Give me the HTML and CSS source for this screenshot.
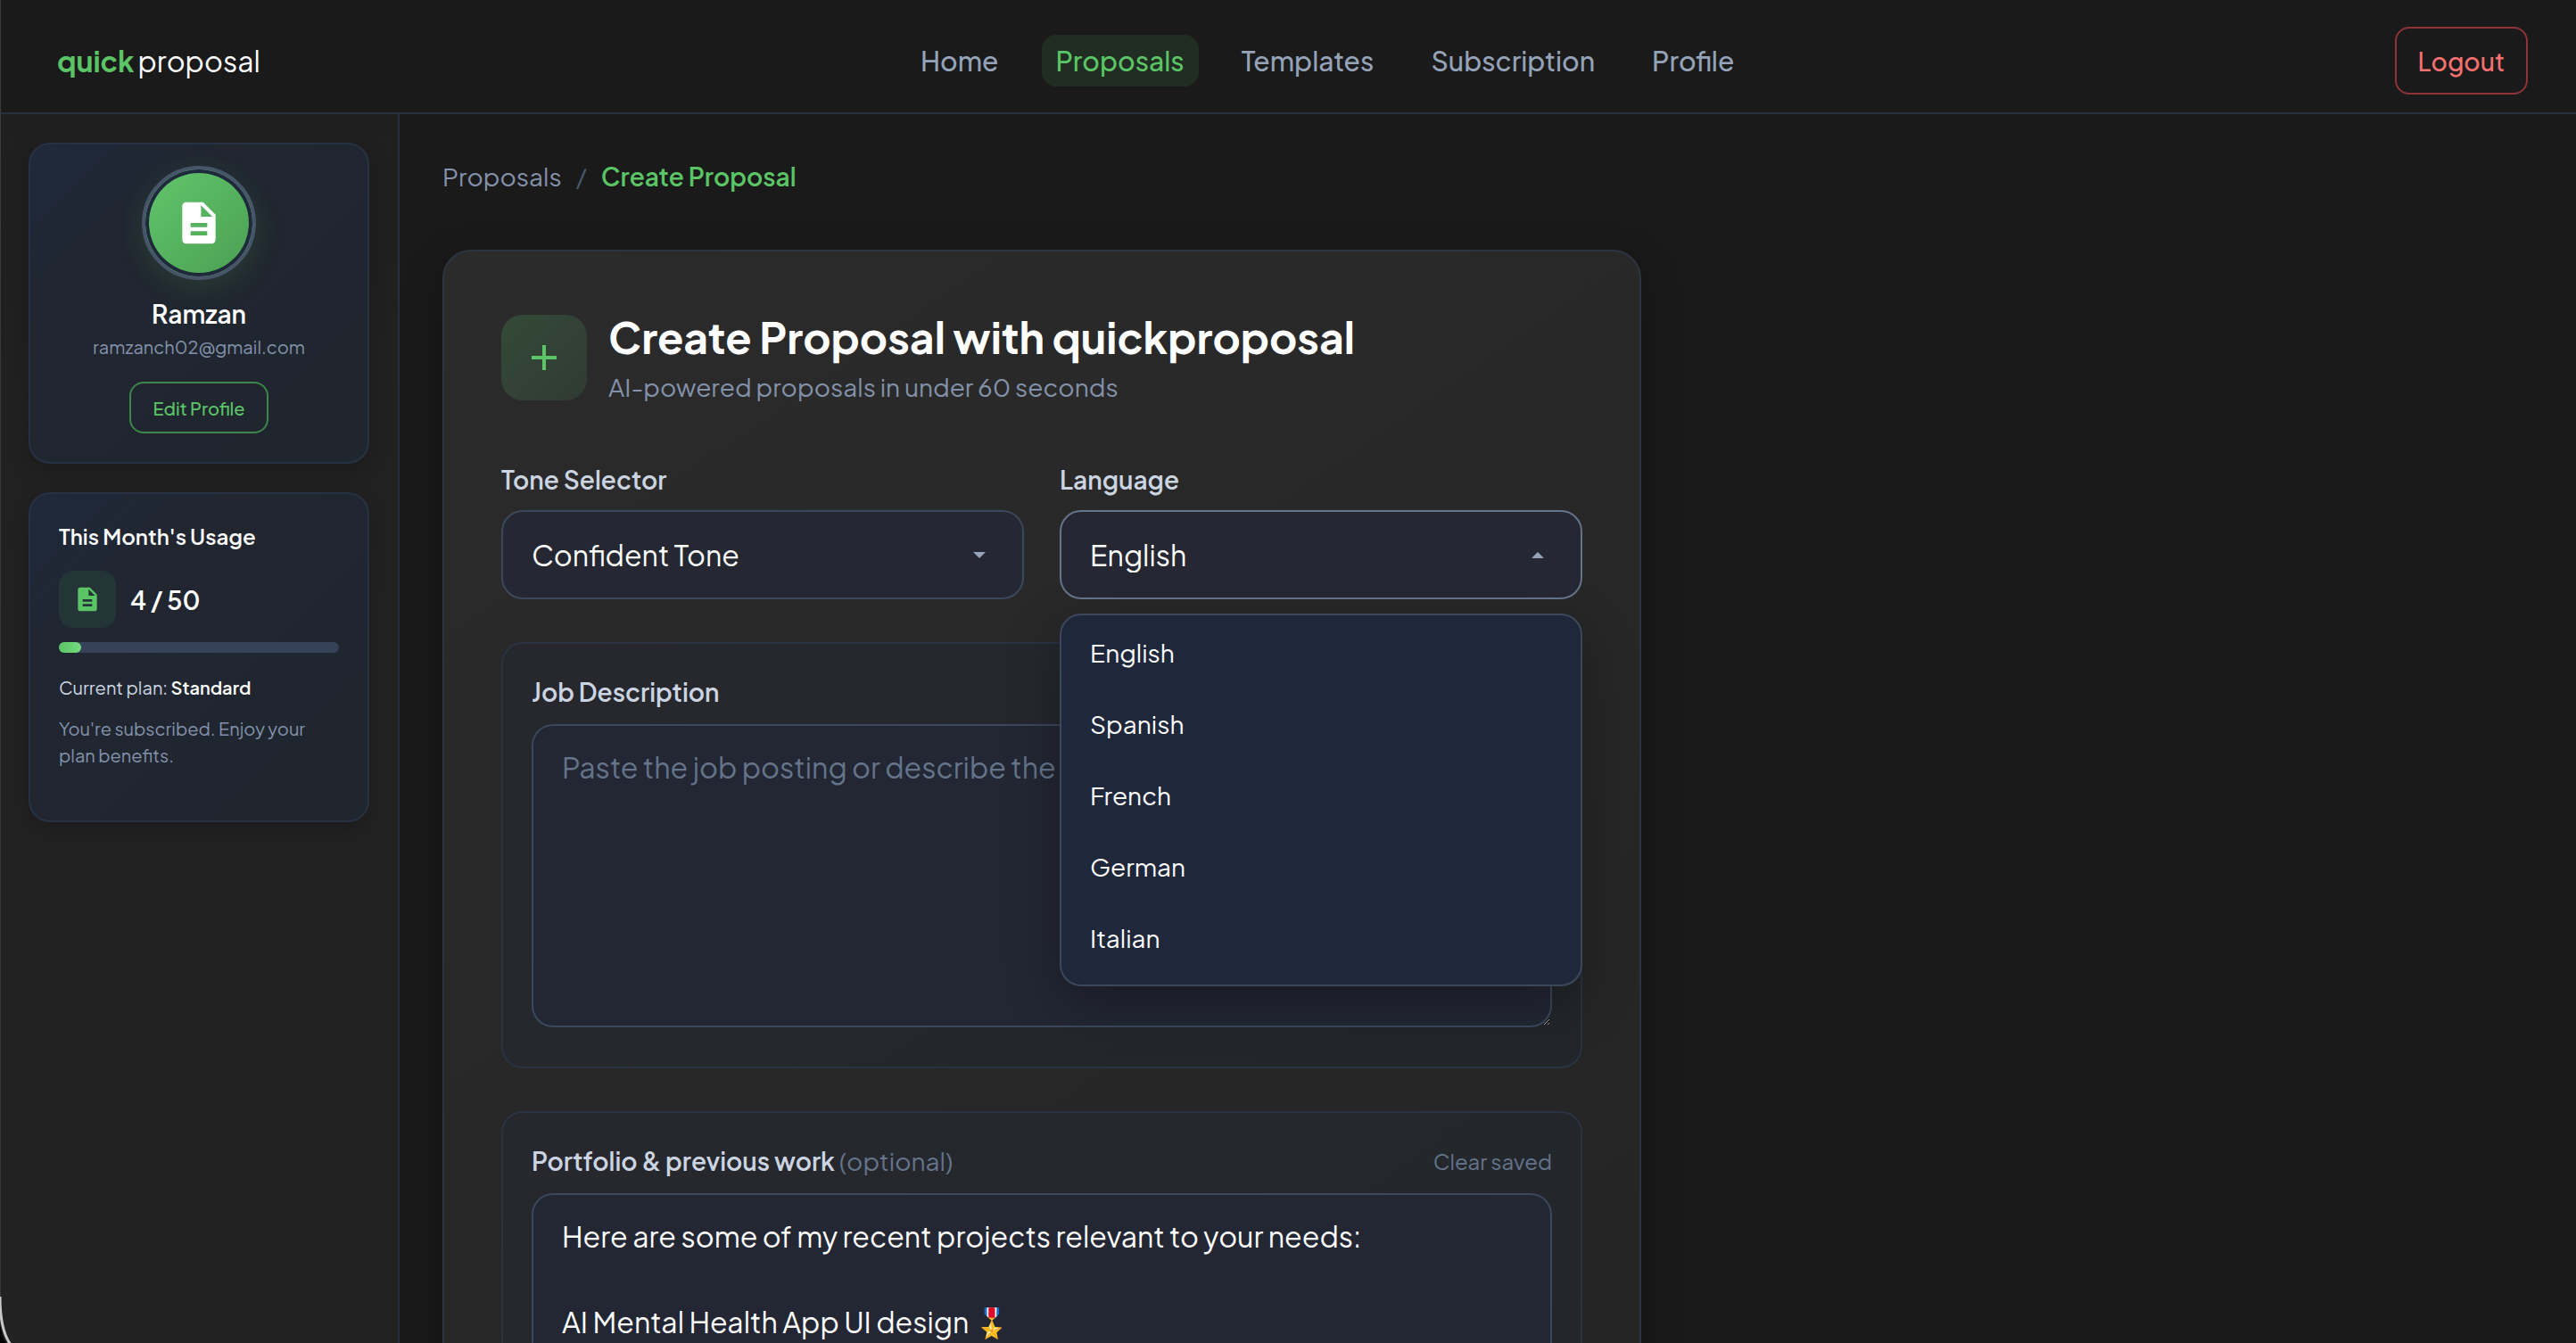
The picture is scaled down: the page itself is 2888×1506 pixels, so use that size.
FILE: index.html
```html
<!DOCTYPE html>
<html lang="en">
<head>
  <meta charset="UTF-8">
  <meta name="viewport" content="width=device-width, initial-scale=1.0">
  <title>Create Proposal - quickproposal</title>
  <link rel="stylesheet" href="styles.css">
</head>
<body>
  <header class="topbar">
    <a class="logo" href="#"><b>quick</b><span>proposal</span></a>
    <nav class="nav">
      <a href="#">Home</a>
      <a href="#" class="active">Proposals</a>
      <a href="#">Templates</a>
      <a href="#">Subscription</a>
      <a href="#">Profile</a>
    </nav>
    <button type="button" class="logout">Logout</button>
  </header>

  <div class="layout">
    <aside class="sidebar">
      <section class="side-card profile">
        <div class="avatar">
          <svg viewBox="0 0 24 24" width="56" height="56" fill="currentColor"><path d="M14 2H6c-1.100 0-2 .9-2 2v16c0 1.100.9 2 2 2h12c1.100 0 2-.9 2-2V8l-6-6zm2 16H8v-2h8v2zm0-4H8v-2h8v2zm-3-5V3.500L18.500 9H13z"/></svg>
        </div>
        <h2 class="profile-name">Ramzan</h2>
        <p class="profile-email">ramzanch02@gmail.com</p>
        <button type="button" class="edit-btn">Edit Profile</button>
      </section>

      <section class="side-card usage">
        <h2 class="usage-title">This Month's Usage</h2>
        <div class="usage-row">
          <div class="usage-icon">
            <svg viewBox="0 0 24 24" width="32" height="32" fill="currentColor"><path d="M14 2H6c-1.100 0-2 .9-2 2v16c0 1.100.9 2 2 2h12c1.100 0 2-.9 2-2V8l-6-6zm2 16H8v-2h8v2zm0-4H8v-2h8v2zm-3-5V3.500L18.500 9H13z"/></svg>
          </div>
          <span class="usage-count">4 / 50</span>
        </div>
        <div class="bar"><div class="bar-fill" style="width: 8%"></div></div>
        <p class="plan">Current plan: <strong>Standard</strong></p>
        <p class="plan-note">You're subscribed. Enjoy your plan benefits.</p>
      </section>
    </aside>

    <main class="content">
      <nav class="crumbs">
        <a href="#">Proposals</a>
        <span class="sep">/</span>
        <span class="current">Create Proposal</span>
      </nav>

      <form class="card">
        <div class="card-head">
          <div class="plus">
            <svg viewBox="0 0 28 28" width="28" height="28"><path d="M14 0v28M0 14h28" stroke="currentColor" stroke-width="4"/></svg>
          </div>
          <div>
            <h1>Create Proposal with quickproposal</h1>
            <p class="subtitle">AI-powered proposals in under 60 seconds</p>
          </div>
        </div>

        <div class="field-row">
          <div class="field">
            <label for="tone">Tone Selector</label>
            <div class="select-wrap">
              <select id="tone">
                <option>Confident Tone</option>
              </select>
              <svg class="caret" viewBox="0 0 14 7" width="14" height="7"><path d="M0 0h14L7 7z" fill="currentColor"/></svg>
            </div>
          </div>
          <div class="field">
            <label for="language">Language</label>
            <div class="select-wrap open">
              <select id="language">
                <option>English</option>
                <option>Spanish</option>
                <option>French</option>
                <option>German</option>
                <option>Italian</option>
              </select>
              <svg class="caret" viewBox="0 0 14 7" width="14" height="7"><path d="M0 7h14L7 0z" fill="currentColor"/></svg>
              <ul class="menu" role="listbox">
                <li role="option">English</li>
                <li role="option">Spanish</li>
                <li role="option">French</li>
                <li role="option">German</li>
                <li role="option">Italian</li>
              </ul>
            </div>
          </div>
        </div>

        <section class="panel">
          <div class="panel-head">
            <label for="job">Job Description</label>
          </div>
          <textarea id="job" placeholder="Paste the job posting or describe the project requirements"></textarea>
        </section>

        <section class="panel">
          <div class="panel-head">
            <label for="portfolio">Portfolio &amp; previous work <span class="optional">(optional)</span></label>
            <button type="button" class="clear-btn">Clear saved</button>
          </div>
          <textarea id="portfolio">Here are some of my recent projects relevant to your needs:

AI Mental Health App UI design 🎖️</textarea>
        </section>
      </form>
    </main>
  </div>
  <svg class="window-corner" viewBox="0 0 14 60" width="14" height="60"><path d="M0 36v24h7C3 54 1 46 0 36z" fill="#000"/><path d="M0 8c0 24 3 42 12 54" fill="none" stroke="#c8c8c8" stroke-width="3"/></svg>
</body>
</html>
```
FILE: styles.css
```css
* {
  box-sizing: border-box;
}

html {
  height: 100%;
  background: #1a1a1a;
}

body {
  margin: 0;
  height: 100%;
  overflow: hidden;
  display: flex;
  flex-direction: column;
  border-left: 1px solid #3a3a3a;
  background: #1a1a1a;
  color: #fff;
  font-family: "Plus Jakarta Sans", Inter, "Liberation Sans", sans-serif;
}

h1, h2, p, ul {
  margin: 0;
  padding: 0;
}

a {
  color: inherit;
  text-decoration: none;
}

button, select, textarea {
  font: inherit;
}

button {
  background: none;
  cursor: pointer;
}

/* Header */
.topbar {
  flex: none;
  display: flex;
  align-items: center;
  justify-content: space-between;
  height: 128px;
  padding: 10px 54px 0 63px;
  border-bottom: 2px solid #263140;
}

.logo {
  display: flex;
  gap: 4px;
  font-size: 32px;
  line-height: 40px;
}

.logo b {
  color: #5bc566;
  font-weight: 700;
}

.nav {
  display: flex;
  gap: 32px;
}

.nav a {
  padding: 0 16px;
  border-radius: 16px;
  color: #94a3b8;
  font-size: 30px;
  font-weight: 500;
  line-height: 58px;
}

.nav .active {
  background: #212c23;
  color: #5bc566;
}

.logout {
  height: 76px;
  padding: 0 24px;
  border: 2px solid #8f3436;
  border-radius: 16px;
  color: #f87171;
  font-size: 28px;
  font-weight: 500;
}

/* Sidebar */
.layout {
  flex: 1;
  min-height: 0;
  display: flex;
}

.sidebar {
  flex: none;
  display: flex;
  flex-direction: column;
  gap: 32px;
  width: 447px;
  padding: 32px 32px 32px 31px;
  border-right: 2px solid #263140;
  background: linear-gradient(180deg, #1f1f1f, #222 40%);
}

.side-card {
  border: 2px solid #263244;
  border-radius: 24px;
  background: linear-gradient(135deg, #1e293b, #212630 30%, #1f262e);
  box-shadow: 0 8px 24px rgba(0, 0, 0, 0.2);
}

.profile {
  display: flex;
  flex-direction: column;
  align-items: center;
  padding: 24px 32px 32px;
}

.avatar {
  display: flex;
  align-items: center;
  justify-content: center;
  width: 128px;
  height: 128px;
  border: 4px solid #475569;
  border-radius: 50%;
  background: linear-gradient(135deg, #62c66d, #4a9f51);
  box-shadow: inset 0 0 0 4px #1e293b, 0 8px 32px rgba(91, 197, 102, 0.15);
}

.profile-name {
  margin-top: 20px;
  font-size: 28px;
  font-weight: 600;
  line-height: 36px;
}

.profile-email {
  margin-top: 4px;
  color: #8392ab;
  font-size: 20px;
  line-height: 30px;
}

.edit-btn {
  height: 58px;
  margin-top: 24px;
  padding: 0 24px;
  border: 2px solid #3f8549;
  border-radius: 16px;
  color: #5bc566;
  font-size: 20px;
  font-weight: 500;
}

.usage {
  padding: 30px 32px 58px;
}

.usage-title {
  font-size: 24px;
  font-weight: 600;
  line-height: 34px;
}

.usage-row {
  display: flex;
  align-items: center;
  gap: 16px;
  margin: 22px 0 16px;
}

.usage-icon {
  display: flex;
  align-items: center;
  justify-content: center;
  width: 64px;
  height: 64px;
  border-radius: 16px;
  background: #243538;
  color: #5bc566;
}

.usage-count {
  font-size: 28px;
  font-weight: 600;
}

.bar {
  height: 12px;
  border-radius: 6px;
  background: #364258;
}

.bar-fill {
  height: 12px;
  border-radius: 6px;
  background: linear-gradient(90deg, #5bc566, #74d97e);
}

.plan {
  margin-top: 24px;
  color: #cbd5e1;
  font-size: 20px;
  line-height: 30px;
}

.plan strong {
  color: #fff;
  font-weight: 600;
}

.plan-note {
  margin-top: 16px;
  color: #8392ab;
  font-size: 20px;
  line-height: 30px;
}

/* Main column */
.content {
  flex: 1;
  padding: 50px 48px 0;
}

.crumbs {
  display: flex;
  gap: 16px;
  margin-bottom: 62px;
  color: #8392ab;
  font-size: 28px;
  line-height: 40px;
}

.crumbs .sep {
  color: #475569;
}

.crumbs .current {
  color: #5bc566;
  font-weight: 600;
}

.card {
  max-width: 1344px;
  min-height: 1400px;
  padding: 64px;
  border: 2px solid #2c3442;
  border-radius: 32px;
  background: linear-gradient(145deg, #2b2b2b, #252525 80%);
  box-shadow: 0 16px 48px rgba(0, 0, 0, 0.3);
}

.card-head {
  display: flex;
  align-items: center;
  gap: 24px;
  margin-bottom: 62px;
}

.plus {
  display: flex;
  align-items: center;
  justify-content: center;
  width: 96px;
  height: 96px;
  border-radius: 24px;
  background: linear-gradient(135deg, #344a38, #303b32);
  color: #5bc566;
}

h1 {
  font-size: 48px;
  font-weight: 700;
  line-height: 64px;
}

.subtitle {
  margin-top: 2px;
  color: #8392ab;
  font-size: 28px;
  line-height: 44px;
}

.field-row {
  display: flex;
  gap: 40px;
  margin-bottom: 48px;
}

.field {
  flex: 1;
}

label {
  display: block;
  color: #cbd5e1;
  font-size: 28px;
  font-weight: 600;
  line-height: 40px;
}

.field label {
  margin-bottom: 14px;
}

.select-wrap {
  position: relative;
  color: #94a3b8;
}

select {
  display: block;
  width: 100%;
  height: 100px;
  padding: 0 80px 0 32px;
  border: 2px solid #3b485c;
  border-radius: 24px;
  appearance: none;
  background: #252832;
  color: #fff;
  font-size: 32px;
}

.open select {
  border-color: #64748b;
}

.caret {
  position: absolute;
  top: 47px;
  right: 43px;
}

.menu {
  position: absolute;
  top: 116px;
  left: 0;
  right: 0;
  z-index: 10;
  padding: 2px 0 12px;
  border: 2px solid #3b485c;
  border-radius: 24px;
  background: #1f273b;
  box-shadow: 0 20px 60px rgba(0, 0, 0, 0.3);
  color: #fff;
  list-style: none;
}

.menu li {
  padding: 0 32px;
  font-size: 28px;
  line-height: 80px;
}

.panel {
  margin-bottom: 48px;
  padding: 34px 32px 44px;
  border: 2px solid #2a3344;
  border-radius: 24px;
  background: linear-gradient(145deg, #26282e, #22262a);
}

.panel-head {
  display: flex;
  justify-content: space-between;
  align-items: center;
  margin-bottom: 16px;
}

.optional {
  color: #64748b;
  font-weight: 400;
}

.clear-btn {
  padding: 0;
  border: 0;
  color: #64748b;
  font-size: 24px;
}

textarea {
  display: block;
  width: 100%;
  height: 340px;
  padding: 22px 32px;
  border: 2px solid #3b485c;
  border-radius: 24px;
  background: #232733;
  color: #fff;
  font-size: 32px;
  line-height: 48px;
  resize: vertical;
}

textarea::placeholder {
  color: #64748b;
}

/* Rounded lower-left window edge */
.window-corner {
  position: absolute;
  left: 0;
  bottom: 0;
}
```
